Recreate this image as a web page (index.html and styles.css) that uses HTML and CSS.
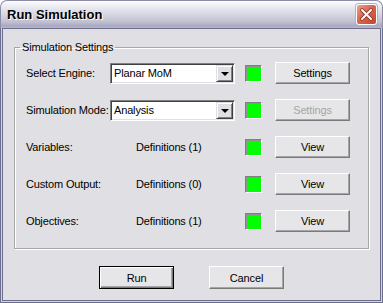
FILE: index.html
```html
<!DOCTYPE html>
<html lang="en">
<head>
    <meta charset="UTF-8">
    <title>Run Simulation</title>
    <link rel="stylesheet" href="styles.css">
</head>
<body>
    <div class="window">
        <div class="titlebar">
            <span class="title">Run Simulation</span>
            <div class="close">
                <svg width="13" height="13" viewBox="0 0 13 13">
                    <path d="M2 2 L11 11 M11 2 L2 11" stroke="#7a2a1e" stroke-width="3.4" stroke-linecap="square"/>
                    <path d="M2 2 L11 11 M11 2 L2 11" stroke="#fff" stroke-width="2" stroke-linecap="square"/>
                </svg>
            </div>
        </div>
        <div class="frame">
            <div class="client">
                <fieldset class="group">
                    <legend>Simulation Settings</legend>
                    <div class="grid">
                        <span class="label">Select Engine:</span>
                        <div class="combo"><span class="combo-text">Planar MoM</span><span class="drop"><i></i></span></div>
                        <span class="status"></span>
                        <button class="btn">Settings</button>

                        <span class="label">Simulation Mode:</span>
                        <div class="combo"><span class="combo-text">Analysis</span><span class="drop"><i></i></span></div>
                        <span class="status"></span>
                        <button class="btn" disabled>Settings</button>

                        <span class="label">Variables:</span>
                        <span class="defs">Definitions (1)</span>
                        <span class="status"></span>
                        <button class="btn">View</button>

                        <span class="label">Custom Output:</span>
                        <span class="defs">Definitions (0)</span>
                        <span class="status"></span>
                        <button class="btn">View</button>

                        <span class="label">Objectives:</span>
                        <span class="defs">Definitions (1)</span>
                        <span class="status"></span>
                        <button class="btn">View</button>
                    </div>
                </fieldset>
                <div class="actions">
                    <button class="btn btn-default">Run</button>
                    <button class="btn">Cancel</button>
                </div>
            </div>
        </div>
    </div>
</body>
</html>
```

FILE: styles.css
```css
html, body {
    margin: 0;
    padding: 0;
    background: #ffffff;
}
body {
    font-family: "Liberation Sans", Arial, sans-serif;
    font-size: 11px;
    letter-spacing: -0.15px;
    color: #000;
}
.window {
    width: 383px;
    height: 303px;
    display: flex;
    flex-direction: column;
}
.titlebar {
    height: 28px;
    box-sizing: border-box;
    border: 1px solid #8d8da8;
    border-bottom: none;
    border-radius: 7px 7px 0 0;
    background: linear-gradient(#fdfdff 0%, #ececf3 20%, #d6d6e2 50%, #bdbdcf 80%, #a8a8c0 92%, #b8b8cc 100%);
    display: flex;
    align-items: center;
    justify-content: space-between;
    padding: 0 5px 0 6px;
}
.title {
    font-weight: bold;
    font-size: 13px;
    letter-spacing: 0;
    color: #000;
    text-shadow: 1px 1px 0 #ffffff;
}
.close {
    width: 21px;
    height: 21px;
    box-sizing: border-box;
    border: 1px solid #ffffff;
    border-radius: 3px;
    background: linear-gradient(135deg, #f0a08a 0%, #dd6a52 40%, #c8432e 100%);
    box-shadow: 0 0 0 1px #b0b0c4;
    display: flex;
    align-items: center;
    justify-content: center;
}
.frame {
    flex: 1;
    display: flex;
    border: 1px solid #6d6d8d;
    border-top: none;
    padding: 0 1px 1px;
    background: #d2d2df;
}
.client {
    flex: 1;
    border: 1px solid #6d6d8d;
    background: #e0dfe3;
}
.group {
    margin: 12px 0 0 11px;
    width: 355px;
    box-sizing: border-box;
    border: 1px solid #a6a6ab;
    box-shadow: 1px 1px 0 #ffffff, inset 1px 1px 0 #ffffff;
    padding: 8px 0 16px 0;
    min-width: 0;
}
.group legend {
    padding: 0 2px;
    margin-left: 5px;
    line-height: 13px;
}
.grid {
    display: grid;
    grid-template-columns: 84px 135px 30px 75px;
    grid-auto-rows: 22px;
    row-gap: 15px;
    align-items: center;
    margin-left: 11px;
}
.label {
    white-space: nowrap;
}
.combo {
    width: 125px;
    height: 21px;
    box-sizing: border-box;
    background: #ffffff;
    border: 1px solid;
    border-color: #808080 #ffffff #ffffff #808080;
    box-shadow: inset 1px 1px 0 #404040, inset -1px -1px 0 #e0dfe3;
    display: flex;
    align-items: center;
    padding: 1px;
}
.combo-text {
    flex: 1;
    padding-left: 2px;
}
.drop {
    width: 17px;
    height: 17px;
    box-sizing: border-box;
    background: #e0dfe3;
    border: 1px solid;
    border-color: #e0dfe3 #404040 #404040 #e0dfe3;
    box-shadow: inset 1px 1px 0 #ffffff, inset -1px -1px 0 #808080;
    display: flex;
    align-items: center;
    justify-content: center;
}
.drop i {
    width: 0;
    height: 0;
    border-left: 4px solid transparent;
    border-right: 4px solid transparent;
    border-top: 4px solid #000;
    margin-top: 1px;
}
.defs {
    padding-left: 26px;
}
.status {
    width: 17px;
    height: 17px;
    box-sizing: border-box;
    background: #00ff00;
    border: 1px solid;
    border-color: #808080 #ffffff #ffffff #808080;
    box-shadow: inset 1px 1px 0 #909090;
}
.btn {
    width: 75px;
    height: 22px;
    box-sizing: border-box;
    font-family: inherit;
    font-size: 11px;
    letter-spacing: -0.15px;
    color: #000;
    background: #e6e6e8;
    border: 1px solid;
    border-color: #ffffff #7a7a7a #7a7a7a #ffffff;
    box-shadow: inset -1px -1px 0 #a5a5a8;
    padding: 0;
}
.btn:disabled {
    color: #a5a5a5;
}
.actions {
    display: flex;
    justify-content: center;
    gap: 35px;
    margin-top: 17px;
}
.actions .btn {
    height: 23px;
}
.btn-default {
    border: 1px solid #000;
    box-shadow: inset 1px 1px 0 #ffffff, inset -1px -1px 0 #7a7a7a, inset -2px -2px 0 #a5a5a8;
}
```
